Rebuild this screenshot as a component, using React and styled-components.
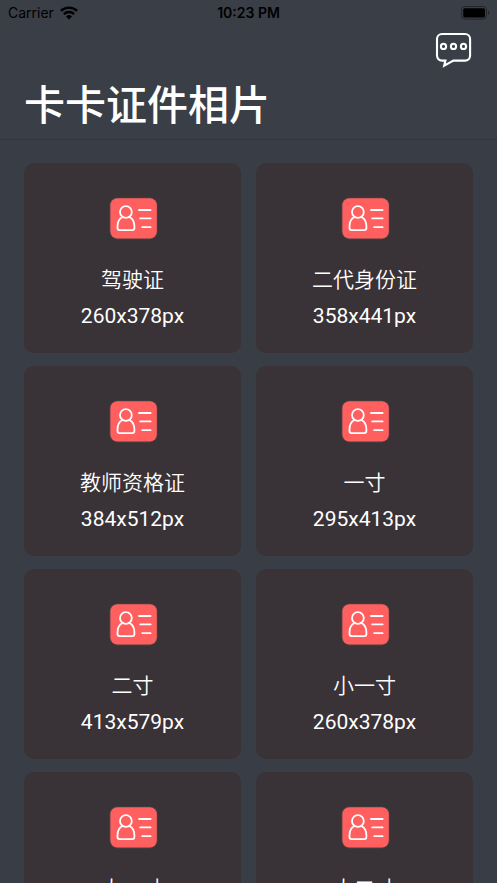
import React from "react";
import styled, { createGlobalStyle } from "styled-components";

const GlobalStyle = createGlobalStyle`
  * {
    box-sizing: border-box;
  }
  body {
    margin: 0;
    background: #3a3e46;
    font-family: Inter, "Noto Sans CJK SC", sans-serif;
    color: #fff;
  }
`;

const Page = styled.div`
  height: 100vh;
  display: flex;
  flex-direction: column;
  background: #3a3e46;
`;

const StatusBar = styled.div`
  flex: none;
  height: 26px;
  padding: 0 8px;
  display: grid;
  grid-template-columns: 1fr auto 1fr;
  align-items: center;
  color: #000;
  font-size: 14px;
  line-height: 18px;
`;

const Carrier = styled.div`
  display: flex;
  align-items: center;
  gap: 6px;
`;

const Time = styled.time`
  font-weight: 600;
`;

const Battery = styled.svg`
  justify-self: end;
  margin-right: -1px;
`;

const Header = styled.header`
  flex: none;
  display: flex;
  flex-direction: column;
  padding: 5px 24px 7px;
  border-bottom: 1px solid #31343b;
`;

const MessageButton = styled.button`
  align-self: flex-end;
  display: flex;
  padding: 0;
  border: none;
  background: none;
  color: inherit;
  cursor: pointer;
`;

const Title = styled.h1`
  margin: 9px 0 0;
  font-size: 41px;
  line-height: 54px;
  font-weight: 500;
`;

const Content = styled.main`
  flex: 1;
  min-height: 0;
  overflow-y: auto;
  scrollbar-width: none;
  background: #393e46;
`;

const CardGrid = styled.div`
  display: grid;
  grid-template-columns: 1fr 1fr;
  gap: 13px 15px;
  padding: 23px 24px 24px;
`;

const Card = styled.button`
  height: 190px;
  display: flex;
  flex-direction: column;
  align-items: center;
  padding: 31px 0 0;
  border: none;
  border-radius: 10px;
  background: #393237;
  color: #fff;
  font-family: Roboto, "Noto Sans CJK SC", sans-serif;
  font-size: 21px;
  line-height: 36px;
  cursor: pointer;
`;

const CardName = styled.span`
  margin-top: 21px;
  font-weight: 350;
`;

const CardSize = styled.span`
  font-weight: 400;
`;

const WifiIcon = () => (
  <svg width="18" height="14" viewBox="0 0 18 14" aria-hidden="true">
    <g fill="none" stroke="#000" strokeWidth="2.3">
      <path d="M0.9 4.9a11.6 11.6 0 0 1 16.2 0" />
      <path d="M3.9 8.1a7.3 7.3 0 0 1 10.2 0" />
    </g>
    <path d="M9 13.4 6 10.4a4.3 4.3 0 0 1 6 0z" fill="#000" />
  </svg>
);

const BatteryIcon = () => (
  <Battery width="29" height="14" viewBox="0 0 29 14" aria-hidden="true">
    <rect
      x="0.5"
      y="0.5"
      width="25"
      height="12.6"
      rx="3.4"
      fill="none"
      stroke="#23252a"
    />
    <rect x="2.2" y="2.2" width="21.8" height="9.2" rx="1.6" />
    <path d="M27 4.6c1.6.8 1.6 3.6 0 4.4z" fill="#23252a" />
  </Battery>
);

const MessageIcon = () => (
  <svg
    width="38"
    height="38"
    viewBox="0 0 38 38"
    fill="none"
    stroke="currentColor"
    strokeWidth="2.1"
    aria-hidden="true"
  >
    <path d="M7 3h23.1a5 5 0 0 1 5 5v16.6a5 5 0 0 1-5 5H18.4l-9.2 5.1 1.2-5.1H7a5 5 0 0 1-5-5V8a5 5 0 0 1 5-5z" />
    <circle cx="8.5" cy="15.4" r="2.6" />
    <circle cx="18.5" cy="15.4" r="2.6" />
    <circle cx="28.5" cy="15.4" r="2.6" />
  </svg>
);

const IdCardIcon = () => (
  <svg width="52" height="47" viewBox="0 0 52 47" aria-hidden="true">
    <rect x="2.4" y="3.4" width="48.2" height="42" rx="8" fill="#4b4341" />
    <rect x="3.4" y="4.3" width="46.4" height="40.3" rx="7" fill="#ff5f5f" />
    <g fill="none" stroke="#fff" strokeWidth="1.8" strokeLinecap="round">
      <circle cx="18.9" cy="18" r="5.9" />
      <path d="M15.6 23c-3.2 1.500-5.100 4.900-5.100 9.300v1.800c0 1.300.8 2 2 2h12.900c1.200 0 2-.7 2-2v-1.800c0-4.400-1.900-7.800-5.100-9.300" />
      <path d="M32 16h11.600M33.200 24.400h10.400M35.200 33.200h8.400" />
    </g>
  </svg>
);

const photoTypes = [
  { name: "驾驶证", size: "260x378px" },
  { name: "二代身份证", size: "358x441px" },
  { name: "教师资格证", size: "384x512px" },
  { name: "一寸", size: "295x413px" },
  { name: "二寸", size: "413x579px" },
  { name: "小一寸", size: "260x378px" },
  { name: "大一寸", size: "390x567px" },
  { name: "大二寸", size: "413x626px" },
];

const App = () => {
  return (
    <Page lang="zh-CN">
      <GlobalStyle />
      <StatusBar>
        <Carrier>
          <span>Carrier</span>
          <WifiIcon />
        </Carrier>
        <Time>10:23 PM</Time>
        <BatteryIcon />
      </StatusBar>
      <Header>
        <MessageButton type="button" aria-label="消息">
          <MessageIcon />
        </MessageButton>
        <Title>卡卡证件相片</Title>
      </Header>
      <Content>
        <CardGrid>
          {photoTypes.map((item) => (
            <Card type="button" key={item.name}>
              <IdCardIcon />
              <CardName>{item.name}</CardName>
              <CardSize>{item.size}</CardSize>
            </Card>
          ))}
        </CardGrid>
      </Content>
    </Page>
  );
};

export default App;
